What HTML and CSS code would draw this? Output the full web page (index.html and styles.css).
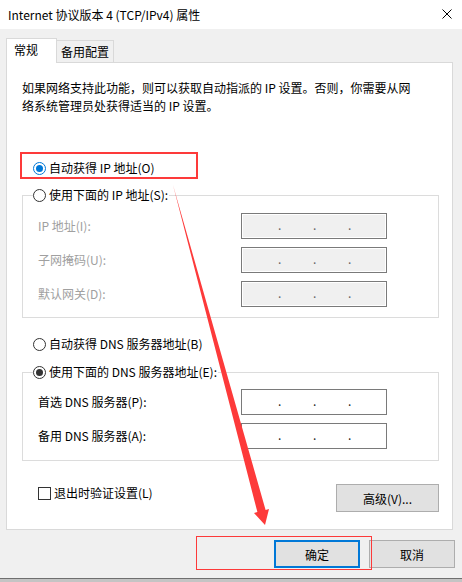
FILE: index.html
```html
<!DOCTYPE html>
<html lang="zh-CN">
<head>
<meta charset="utf-8">
<title>Internet 协议版本 4 (TCP/IPv4) 属性</title>
<link rel="stylesheet" href="styles.css">
</head>
<body>
<div class="window">
  <div class="titlebar">
    <span class="title">Internet 协议版本 4 (TCP/IPv4) 属性</span>
    <svg class="close" viewBox="0 0 10 10" width="10" height="10"><path d="M0.5 0.5 L9.5 9.5 M9.5 0.5 L0.5 9.5" stroke="#000" stroke-width="1" fill="none"/></svg>
  </div>
  <div class="client">
    <div class="tabs">
      <div class="tab tab-active">常规</div>
      <div class="tab tab-other">备用配置</div>
    </div>
    <div class="panel">
      <p class="desc">如果网络支持此功能，则可以获取自动指派的 IP 设置。否则，你需要从网络系统管理员处获得适当的 IP 设置。</p>

      <div class="option option-first">
        <span class="radio radio-blue"></span><span>自动获得 IP 地址(O)</span>
      </div>

      <div class="group group-ip">
        <div class="legend">
          <span class="radio"></span><span>使用下面的 IP 地址(S):</span>
        </div>
        <div class="rows rows-ip">
          <div class="row">
            <span class="label disabled">IP 地址(I):</span>
            <span class="ip ip-disabled"><span class="seg seg-a"></span><span class="dot">.</span><span class="seg"></span><span class="dot">.</span><span class="seg"></span><span class="dot">.</span><span class="seg"></span></span>
          </div>
          <div class="row">
            <span class="label disabled">子网掩码(U):</span>
            <span class="ip ip-disabled"><span class="seg seg-a"></span><span class="dot">.</span><span class="seg"></span><span class="dot">.</span><span class="seg"></span><span class="dot">.</span><span class="seg"></span></span>
          </div>
          <div class="row">
            <span class="label disabled">默认网关(D):</span>
            <span class="ip ip-disabled"><span class="seg seg-a"></span><span class="dot">.</span><span class="seg"></span><span class="dot">.</span><span class="seg"></span><span class="dot">.</span><span class="seg"></span></span>
          </div>
        </div>
      </div>

      <div class="option option-dns">
        <span class="radio"></span><span>自动获得 DNS 服务器地址(B)</span>
      </div>

      <div class="group group-dns">
        <div class="legend">
          <span class="radio radio-dark"></span><span>使用下面的 DNS 服务器地址(E):</span>
        </div>
        <div class="rows rows-dns">
          <div class="row">
            <span class="label">首选 DNS 服务器(P):</span>
            <span class="ip"><span class="seg seg-a"></span><span class="dot">.</span><span class="seg"></span><span class="dot">.</span><span class="seg"></span><span class="dot">.</span><span class="seg"></span></span>
          </div>
          <div class="row">
            <span class="label">备用 DNS 服务器(A):</span>
            <span class="ip"><span class="seg seg-a"></span><span class="dot">.</span><span class="seg"></span><span class="dot">.</span><span class="seg"></span><span class="dot">.</span><span class="seg"></span></span>
          </div>
        </div>
      </div>

      <div class="bottom-row">
        <label class="check"><span class="checkbox"></span><span>退出时验证设置(L)</span></label>
        <button class="btn btn-advanced" type="button">高级(V)...</button>
      </div>
    </div>

    <div class="footer">
      <button class="btn btn-default" type="button">确定</button>
      <button class="btn" type="button">取消</button>
    </div>
  </div>

  <div class="mark mark-radio"></div>
  <div class="mark mark-ok"></div>
  <svg class="arrow" viewBox="0 0 462 582" width="462" height="582">
    <polygon points="173,185 265.6,509.9 269,509 265,525 254,513 257.4,512.1" fill="#fd3a3a"/>
  </svg>
</div>
</body>
</html>
```
FILE: styles.css
```css
* {
  box-sizing: border-box;
}

html,
body {
  margin: 0;
  padding: 0;
}

body {
  width: 462px;
  height: 582px;
  overflow: hidden;
  font-family: "Noto Sans CJK SC", "Microsoft YaHei", sans-serif;
  font-size: 12px;
  color: #000;
  background: #c4c4c4;
}

.window {
  position: relative;
  width: 462px;
  height: 582px;
  background: #c4c4c4;
}

.titlebar {
  height: 29px;
  background: #fff;
  display: flex;
  align-items: center;
  justify-content: space-between;
  padding: 0 10px 0 8px;
}

.title {
  line-height: 18px;
}

.close {
  display: block;
  margin-top: -2px;
}

.client {
  height: 550px;
  background: #f0f0f0;
  border-bottom: 1px solid #6f6f6f;
  padding-top: 9px;
}

.tabs {
  display: flex;
  align-items: flex-end;
  height: 24px;
  padding-left: 6px;
}

.tab {
  border: 1px solid #d9d9d9;
  border-bottom: none;
  line-height: 22px;
  white-space: nowrap;
}

.tab-active {
  width: 51px;
  height: 25px;
  padding-left: 7px;
  background: #fff;
  position: relative;
  z-index: 1;
  margin-bottom: -1px;
}

.tab-other {
  width: 57px;
  height: 22px;
  padding-left: 4px;
  border-left: none;
  background: #f0f0f0;
}

.panel {
  width: 447px;
  margin-left: 6px;
  background: #fff;
  border: 1px solid #d9d9d9;
  padding: 16px 13px 17px 15px;
}

.desc {
  margin: 0;
  width: 398px;
  line-height: 18px;
}

.option {
  display: flex;
  align-items: center;
  height: 18px;
  line-height: 18px;
  margin-left: 11px;
}

.option-first {
  margin-top: 44px;
}

.option-dns {
  margin-top: 17px;
}

.radio {
  width: 13px;
  height: 13px;
  border: 1px solid #333;
  border-radius: 50%;
  background: #fff;
  margin-right: 3px;
  flex: none;
  display: flex;
  align-items: center;
  justify-content: center;
}

.radio-blue {
  border-color: #0078d7;
}

.radio-blue::after,
.radio-dark::after {
  content: "";
  width: 7px;
  height: 7px;
  border-radius: 50%;
  background: #0078d7;
}

.radio-dark::after {
  background: #333;
}

.group {
  width: 417px;
  border: 1px solid #dcdcdc;
  padding: 0 0 0 15px;
}

.group-ip {
  margin-top: 18px;
  padding-bottom: 10px;
}

.group-dns {
  margin-top: 19px;
  padding-bottom: 11px;
}

.legend {
  display: flex;
  align-items: center;
  width: fit-content;
  height: 18px;
  line-height: 18px;
  margin: -10px 0 0 -5px;
  background: #fff;
  padding-right: 1px;
}

.rows {
  display: flex;
  flex-direction: column;
  gap: 8px;
}

.rows-ip {
  margin-top: 9px;
}

.rows-dns {
  margin-top: 8px;
}

.row {
  display: flex;
  align-items: center;
  height: 26px;
}

.label {
  width: 203px;
  flex: none;
  line-height: 18px;
}

.disabled {
  color: #a0a0a0;
}

.ip {
  display: flex;
  width: 146px;
  height: 26px;
  border: 1px solid #7a7a7a;
  background: #fff;
  line-height: 22px;
}

.ip-disabled {
  background: #f0f0f0;
  box-shadow: inset 0 0 0 1px #fff;
}

.seg {
  width: 32px;
  flex: none;
}

.seg-a {
  width: 36px;
}

.dot {
  width: 3px;
  flex: none;
  text-align: center;
  color: #222;
}

.ip-disabled .dot {
  color: #666;
}

.bottom-row {
  display: flex;
  justify-content: space-between;
  align-items: flex-start;
  margin-top: 23px;
  padding-left: 16px;
}

.check {
  display: flex;
  align-items: center;
  height: 18px;
  line-height: 18px;
}

.checkbox {
  width: 13px;
  height: 13px;
  border: 1px solid #333;
  background: #fff;
  margin-right: 3px;
  flex: none;
}

.btn {
  height: 28px;
  width: 86px;
  padding: 0;
  background: #e1e1e1;
  border: 1px solid #adadad;
  font-family: inherit;
  font-size: 12px;
  color: #000;
}

.btn-advanced {
  width: 103px;
}

.btn-default {
  border: 2px solid #0078d7;
}

.footer {
  display: flex;
  justify-content: flex-end;
  gap: 9px;
  padding: 10px 7px 0 0;
}

.mark {
  position: absolute;
  border: 1px solid #fd3a3a;
}

.mark-radio {
  left: 20px;
  top: 152px;
  width: 178px;
  height: 27px;
  border-width: 2px;
}

.mark-ok {
  left: 196px;
  top: 536px;
  width: 176px;
  height: 34px;
}

.arrow {
  position: absolute;
  left: 0;
  top: 0;
  pointer-events: none;
}
```
